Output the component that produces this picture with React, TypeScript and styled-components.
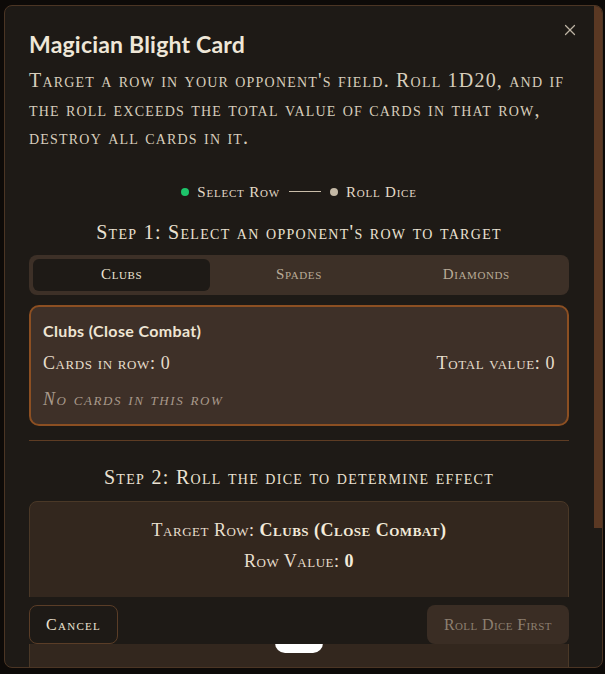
import styled, { createGlobalStyle } from 'styled-components'
import { X } from 'lucide-react'

const serif = `"Liberation Serif", "Times New Roman", serif`
const display = `Lato, "Open Sans", sans-serif`

const GlobalStyle = createGlobalStyle`
  html, body {
    margin: 0;
    padding: 0;
    background: #0d0a08;
  }
  body {
    width: 605px;
    height: 674px;
    overflow: hidden;
  }
  * { box-sizing: border-box; }
`

const Overlay = styled.div`
  height: 674px;
  padding: 5px 0 0 4px;
`

const Dialog = styled.div`
  position: relative;
  width: 599px;
  height: 663px;
  border: 1px solid #4b3524;
  border-radius: 8px;
  background: #1e1a16;
  overflow: hidden;
`

const ScrollArea = styled.div`
  height: 100%;
  overflow-y: auto;
  scrollbar-width: none;
  padding: 24px 33px 23px 24px;

  &::-webkit-scrollbar {
    display: none;
  }
`

const ScrollThumb = styled.div`
  position: absolute;
  top: 0;
  right: 0;
  width: 8px;
  height: 522px;
  background: #5a3823;
  pointer-events: none;
`

const CloseButton = styled.button`
  position: absolute;
  top: 15px;
  right: 23px;
  width: 18px;
  height: 18px;
  padding: 0;
  border: none;
  background: transparent;
  color: #bdb3a4;
  display: flex;
  align-items: center;
  justify-content: center;
  cursor: pointer;
  z-index: 2;
`

const Title = styled.h2`
  margin: 0;
  font-family: ${display};
  font-weight: 700;
  font-size: 23px;
  letter-spacing: 0.2px;
  line-height: 28px;
  color: #efe7d8;
`

const Description = styled.p`
  margin: 8px 0 0;
  font-family: ${serif};
  font-variant: small-caps;
  font-size: 20px;
  letter-spacing: 1.2px;
  line-height: 28.5px;
  color: #d8cebc;
`

const Stepper = styled.div`
  display: flex;
  justify-content: center;
  align-items: center;
  gap: 9px;
  margin-top: 30px;
  font-family: ${serif};
  font-variant: small-caps;
  font-size: 15px;
  letter-spacing: 0.8px;
  line-height: 20px;
  color: #e3d9c7;
`

const StepItem = styled.div`
  display: flex;
  align-items: center;
  gap: 8px;
`

const Dot = styled.span<{ $active?: boolean }>`
  width: 8px;
  height: 8px;
  border-radius: 50%;
  background: ${(p) => (p.$active ? '#1dc46a' : '#c4b8a5')};
`

const Connector = styled.span`
  width: 32px;
  height: 1px;
  background: #c9bda9;
`

const StepHeading = styled.h3<{ $gap: number }>`
  margin: ${(p) => p.$gap}px 0 0;
  text-align: center;
  font-family: ${serif};
  font-variant: small-caps;
  font-weight: 400;
  font-size: 20px;
  letter-spacing: 1.3px;
  line-height: 28px;
  color: #ebe2d2;
`

const Tabs = styled.div`
  margin-top: 9px;
  display: grid;
  grid-template-columns: repeat(3, 1fr);
  height: 40px;
  padding: 4px;
  border-radius: 8px;
  background: #3d3027;
`

const Tab = styled.button<{ $active?: boolean }>`
  border: none;
  border-radius: 6px;
  background: ${(p) => (p.$active ? '#1e1a16' : 'transparent')};
  color: ${(p) => (p.$active ? '#eee5d4' : '#b9ab97')};
  font-family: ${serif};
  font-variant: small-caps;
  font-size: 15px;
  letter-spacing: 0.6px;
  cursor: pointer;
`

const RowCard = styled.div`
  margin-top: 10px;
  border: 2px solid #8c4f22;
  border-radius: 10px;
  background: #3e3028;
  padding: 12px 12px 13px;
`

const CardTitle = styled.div`
  font-family: ${display};
  font-weight: 700;
  font-size: 16px;
  letter-spacing: 0.35px;
  line-height: 24px;
  color: #eee5d4;
`

const Stats = styled.div`
  display: flex;
  justify-content: space-between;
  margin-top: 8px;
  font-family: ${serif};
  font-variant: small-caps;
  font-size: 18px;
  letter-spacing: 0.6px;
  line-height: 24px;
  color: #e6ddcb;
`

const EmptyNote = styled.div`
  margin-top: 12px;
  font-family: ${serif};
  font-variant: small-caps;
  font-style: italic;
  font-size: 18px;
  letter-spacing: 1.6px;
  line-height: 24px;
  color: #a8998b;
`

const Divider = styled.hr`
  margin: 14px 0 0;
  border: none;
  height: 1px;
  background: #5e3c23;
`

const RollPanel = styled.div`
  margin-top: 10px;
  border: 1px solid #4a3827;
  border-radius: 8px;
  background: #33271e;
  padding: 14px 16px 98px;
  text-align: center;
`

const PanelLine = styled.div<{ $gap?: number }>`
  margin-top: ${(p) => p.$gap ?? 0}px;
  font-family: ${serif};
  font-variant: small-caps;
  font-size: 18px;
  letter-spacing: 0.5px;
  line-height: 28px;
  color: #e8dfce;

  strong {
    color: #f3ebda;
  }
`

const DiceButton = styled.button`
  display: block;
  margin: 30px auto 0;
  width: 48px;
  height: 48px;
  border: none;
  border-radius: 10px;
  background: #ffffff;
`

const Footer = styled.div`
  position: sticky;
  bottom: 0;
  margin-top: 24px;
  padding-top: 8px;
  background: #1e1a16;
  display: flex;
  justify-content: space-between;
`

const FooterButton = styled.button<{ $primary?: boolean }>`
  height: 39px;
  padding: 0 16px;
  border-radius: 8px;
  border: 1px solid ${(p) => (p.$primary ? 'transparent' : '#5a3d27')};
  background: ${(p) => (p.$primary ? '#3a2d24' : 'transparent')};
  color: ${(p) => (p.$primary ? '#8c7f70' : '#ece3d2')};
  font-family: ${serif};
  font-variant: small-caps;
  font-size: 16px;
  letter-spacing: ${(p) => (p.$primary ? '0.4px' : '1.3px')};
`

export default function App() {
  return (
    <>
      <GlobalStyle />
      <Overlay>
        <Dialog>
          <CloseButton aria-label="Close">
            <X size={18} strokeWidth={1.6} />
          </CloseButton>
          <ScrollThumb />
          <ScrollArea>
            <Title>Magician Blight Card</Title>
            <Description>
              Target a row in your opponent's field. Roll 1D20, and if the roll exceeds the total value
              of cards in that row, destroy all cards in it.
            </Description>

            <Stepper>
              <StepItem>
                <Dot $active />
                Select Row
              </StepItem>
              <Connector />
              <StepItem>
                <Dot />
                Roll Dice
              </StepItem>
            </Stepper>

            <StepHeading $gap={16}>Step 1: Select an opponent's row to target</StepHeading>
            <Tabs>
              <Tab $active>Clubs</Tab>
              <Tab>Spades</Tab>
              <Tab>Diamonds</Tab>
            </Tabs>

            <RowCard>
              <CardTitle>Clubs (Close Combat)</CardTitle>
              <Stats>
                <span>Cards in row: 0</span>
                <span>Total value: 0</span>
              </Stats>
              <EmptyNote>No cards in this row</EmptyNote>
            </RowCard>

            <Divider />

            <StepHeading $gap={22}>Step 2: Roll the dice to determine effect</StepHeading>
            <RollPanel>
              <PanelLine>
                Target Row: <strong>Clubs (Close Combat)</strong>
              </PanelLine>
              <PanelLine $gap={3}>
                Row Value: <strong>0</strong>
              </PanelLine>
              <DiceButton aria-label="Roll d20" />
            </RollPanel>

            <Footer>
              <FooterButton>Cancel</FooterButton>
              <FooterButton $primary disabled>
                Roll Dice First
              </FooterButton>
            </Footer>
          </ScrollArea>
        </Dialog>
      </Overlay>
    </>
  )
}
